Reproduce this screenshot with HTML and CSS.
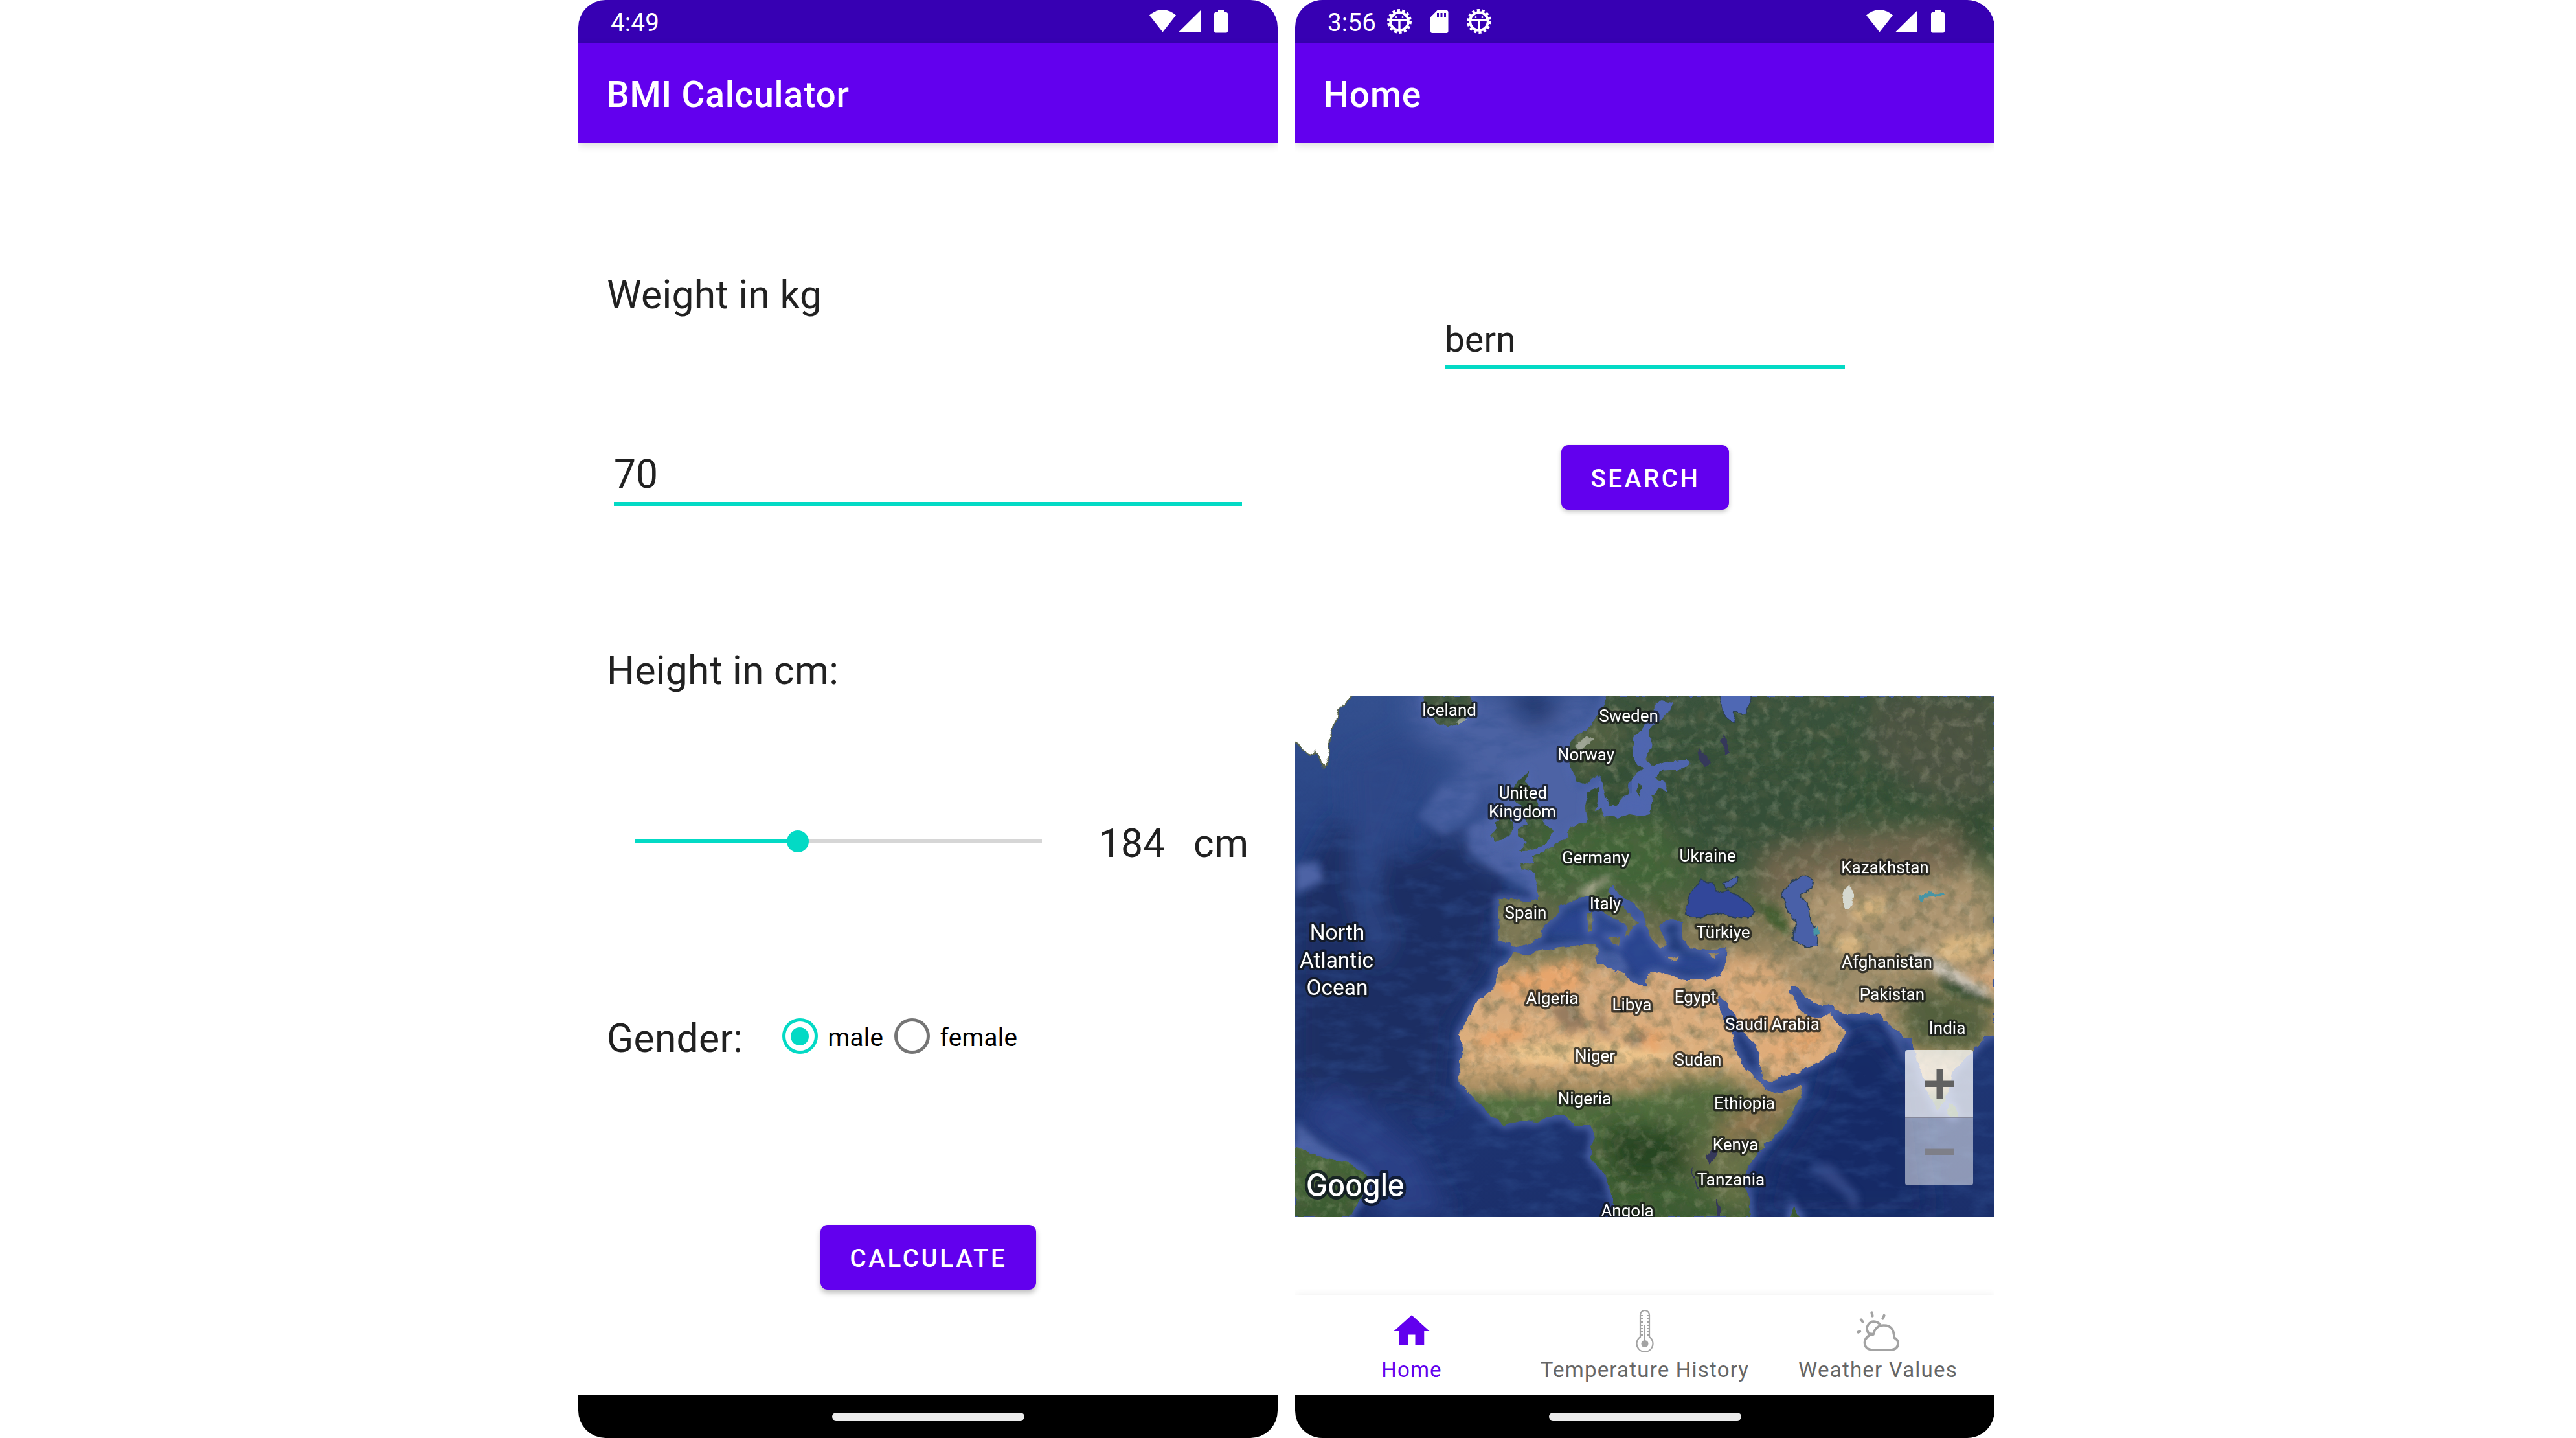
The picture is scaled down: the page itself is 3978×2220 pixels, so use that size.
FILE: index.html
```html
<!DOCTYPE html>
<html lang="en">
<head>
<meta charset="utf-8">
<title>BMI Calculator and Weather</title>
<link rel="stylesheet" href="styles.css">
</head>
<body>
<svg class="defs" width="0" height="0" aria-hidden="true">
  <symbol id="system" viewBox="0 0 121 36">
    <path fill="#fff" d="M0 8.500Q20.500-8.500 41 8.500L20.500 34.500Z"/>
    <path fill="#fff" d="M79 1V35H44.500Z"/>
    <path fill="#fff" d="M106 0h9v4h3.500a2.500 2.500 0 0 1 2.500 2.500V33a2.500 2.500 0 0 1-2.500 2.500h-16A2.500 2.500 0 0 1 100 33V6.500a2.500 2.500 0 0 1 2.500-2.500H106Z"/>
  </symbol>
  <symbol id="bug" viewBox="-20 -20 40 40">
    <g fill="none" stroke="#fff">
      <circle r="13.800" stroke-width="4"/>
      <circle r="16.900" stroke-width="4.200" stroke-dasharray="4.200 3.385"/>
      <path d="M-13-1.700H13M0-1V14" stroke-width="3.400"/>
    </g>
    <circle cx="-5" cy="-6.500" r="1.500" fill="#fff"/><circle cx="5" cy="-6.500" r="1.500" fill="#fff"/>
  </symbol>
  <symbol id="sdcard" viewBox="0 0 28 36">
    <path fill="#fff" fill-rule="evenodd" d="M10.500 0H24.500a3 3 0 0 1 3 3V32a3 3 0 0 1-3 3H3a3 3 0 0 1-3-3V10.500ZM10 4V11H13V4ZM15.500 4V11H18.500V4ZM21 4V11H24V4Z"/>
  </symbol>
</svg>

<main class="stage">
  <section class="phone">
    <header class="status">
      <span class="time">4:49</span>
      <svg class="system"><use href="#system"/></svg>
    </header>
    <div class="appbar">BMI Calculator</div>
    <div class="body">
      <div class="heading weight">Weight in kg</div>
      <div class="field kg">70</div>
      <div class="heading height">Height in cm:</div>
      <div class="slider-row">
        <div class="slider"><div class="track"><div class="fill"></div><div class="thumb"></div></div></div>
        <span class="value">184</span><span class="unit">cm</span>
      </div>
      <div class="gender-row">
        <span class="gender">Gender:</span>
        <label class="option"><i class="ring on"></i>male</label>
        <label class="option"><i class="ring"></i>female</label>
      </div>
      <button class="button calculate">CALCULATE</button>
    </div>
    <footer class="gesture"><i></i></footer>
  </section>

  <section class="phone">
    <header class="status">
      <span class="time">3:56</span>
      <svg class="bug"><use href="#bug"/></svg>
      <svg class="sdcard"><use href="#sdcard"/></svg>
      <svg class="bug"><use href="#bug"/></svg>
      <svg class="system"><use href="#system"/></svg>
    </header>
    <div class="appbar">Home</div>
    <div class="body">
      <div class="field city">bern</div>
      <button class="button search">SEARCH</button>
      <div class="map">
        <svg class="terrain" viewBox="0 0 1080 804">
          <defs>
            <path id="land" d="M479 0L472 25 452 50 425 68 424 90 425 108 434 132 446 136 460 126 469 120 476 138 480 155 486 168 495 172 500 162 516 152 514 140 518 128 535 112 521 95 523 65 537 48 548 28 557 12 569 7 582 10 576 25 551 47 547 62 551 78 541 98 551 107 584 100 605 98 612 105 601 112 566 115 557 125 562 132 571 130 576 148 562 142 551 155 548 182 535 185 516 182 499 188 488 183 478 186 474 172 463 175 467 158 467 140 453 148 449 172 451 193 425 202 418 218 397 232 385 240 367 248 369 257 348 258 351 267 369 272 374 292 374 312 362 318 340 313 314 313 313 335 316 355 314 377 332 382 337 388 358 383 379 372 383 355 404 338 409 323 425 317 453 307 463 315 470 328 495 345 513 355 511 372 516 365 520 352 530 350 516 335 492 315 483 295 490 290 499 305 523 322 537 332 541 352 551 372 566 392 573 382 562 352 584 343 598 348 598 372 609 388 637 392 666 387 664 412 655 433 630 438 601 438 562 425 545 428 541 445 530 445 502 427 467 412 465 400 469 392 463 382 411 387 380 392 355 400 341 395 334 405 313 422 307 452 281 468 267 498 253 523 260 545 253 577 255 598 278 622 299 645 323 662 351 655 372 658 393 647 418 647 432 662 456 662 462 678 455 712 481 742 492 778 495 804H703L701 772 692 745 701 722 730 688 762 655 780 622 785 602 759 610 734 613 723 602 691 568 676 538 673 518 651 475 655 462 666 472 687 508 716 548 723 592 734 595 794 572 834 548 851 518 837 505 825 488 809 498 787 492 762 455 765 448 776 448 791 468 816 478 826 475 837 487 869 492 901 490 916 505 941 528 953 528 955 545 964 575 976 608 992 640 1005 622 1014 582 1048 545 1066 525 1080 523V0H705L696 27 680 25 676 40 662 28 657 0Z"/>
            <path id="isles" d="M362 115L350 126 338 140 337 160 352 172 358 198 344 204 344 218 358 225 344 240 390 228 399 208 383 195 378 176 365 142 355 130ZM307 195L330 182 337 195 335 212 309 225 302 215 310 205ZM197 0L203 22 218 38 235 48 264 38 278 15 271 0ZM0 695L46 713 81 720 109 737 113 752 99 778 83 804H0ZM451 335l7 0 1 26-6 3zM483 372l19 0-2 13zM570 401l24 1-10 5zM638 398l16-2-6 8zM769 788l10 16h-16zM1011 628q12 8 10 20-8 8-12-2zM530 135l6 4-5 14-4-6z"/>
            <clipPath id="landClip"><use href="#land"/><use href="#isles"/></clipPath>
            <linearGradient id="sea" x2="0" y2="1"><stop offset="0" stop-color="#34508f"/><stop offset=".35" stop-color="#243f7f"/><stop offset="1" stop-color="#1b2f6b"/></linearGradient>
            <linearGradient id="ground" x2="0" y2="1"><stop offset="0" stop-color="#3a523c"/><stop offset=".2" stop-color="#334f35"/><stop offset=".35" stop-color="#455d3c"/><stop offset=".47" stop-color="#777352"/><stop offset=".53" stop-color="#d6a87b"/><stop offset=".7" stop-color="#deb07d"/><stop offset=".75" stop-color="#a98e62"/><stop offset=".78" stop-color="#53703f"/><stop offset="1" stop-color="#395a30"/></linearGradient>
            <filter id="b6" x="-30%" y="-30%" width="160%" height="160%"><feGaussianBlur stdDeviation="6"/></filter>
            <filter id="b20" x="-50%" y="-50%" width="200%" height="200%"><feGaussianBlur stdDeviation="18"/></filter>
            <filter id="coast" x="0" y="0" width="100%" height="100%"><feTurbulence type="fractalNoise" baseFrequency=".07" numOctaves="3" seed="4"/><feDisplacementMap in="SourceGraphic" scale="9" xChannelSelector="R" yChannelSelector="G"/></filter>
            <filter id="streaks" x="0" y="0" width="100%" height="100%"><feTurbulence type="fractalNoise" baseFrequency=".022 .05" numOctaves="5" seed="8"/><feColorMatrix values="0 0 0 0 .03  0 0 0 0 .08  0 0 0 0 .28  2.200 0 0 0 -.950"/></filter>
            <filter id="relief" x="0" y="0" width="100%" height="100%"><feTurbulence type="fractalNoise" baseFrequency=".045" numOctaves="5" seed="21"/><feColorMatrix values="0 0 0 0 .1  0 0 0 0 .12  0 0 0 0 .06  2.400 0 0 0 -1.050"/></filter>
            <filter id="light" x="0" y="0" width="100%" height="100%"><feTurbulence type="fractalNoise" baseFrequency=".06" numOctaves="5" seed="33"/><feColorMatrix values="0 0 0 0 .9  0 0 0 0 .82  0 0 0 0 .62  0 2.600 0 0 -1.250"/></filter>
          </defs>
          <rect width="1080" height="804" fill="url(#sea)"/>
          <g filter="url(#b20)">
            <path fill="#1a2d63" d="M60 190L180 250 240 200 290 260 370 300 310 330 300 420 240 500 230 640 0 600V300Z"/>
            <path fill="#4c62a3" d="M170 0H480L420 120 420 200 360 250 300 255 270 225 280 195 310 180 310 120 250 200 220 190 230 140 270 100 190 60Z"/>
            <path fill="#2d4687" d="M80 100L170 60 200 90 120 300 150 380 120 420 90 300Z"/>
            <path fill="#1c3268" d="M320 0H400L410 30 360 50Z"/>
            <path fill="#182b66" d="M830 540L900 510 960 600 980 804H720L740 720 810 620Z"/>
            <path fill="#293f86" d="M0 655L100 730 130 804H240L190 700 60 600Z"/>
          </g>
          <g filter="url(#b6)" fill="#4d63a5">
            <path d="M190 185L230 135 275 135 283 160 265 190 230 215Z" opacity=".75"/>
            <path d="M268 200L300 190 380 240 385 315 340 290 290 255 270 240Z"/>
            <path d="M0 260L35 255 45 285 0 305Z"/>
            <path d="M0 655L40 690 110 735 90 725 0 700Z"/>
            <path d="M465 395L505 390 520 420 500 428 470 414Z"/>
            <path d="M910 500L925 510 955 570 940 560Z"/>
            <path d="M795 725L825 720 870 770 865 800 850 770 800 735Z" opacity=".5"/>
          </g>
          <path fill="#2a4590" filter="url(#b6)" d="M385 365L420 335 455 325 500 360 540 350 580 400 660 400 650 430 560 420 530 435 500 395 460 375Z"/>
          <rect width="1080" height="804" filter="url(#streaks)" opacity=".5"/>
          <path fill="#4d63a5" filter="url(#b6)" d="M320 100L425 70 435 140 480 130 520 180 450 200 390 250 310 250 300 190 330 130Z"/>
          <path fill="#4f66b0" d="M520 45L560 0H590V50L620 95 610 120 580 160 550 190H460L470 130 520 150Z"/>
          <g fill="none" stroke="#4f66ad" stroke-width="10" filter="url(#b6)"><use href="#land"/><use href="#isles"/></g>
          <g filter="url(#coast)">
            <g clip-path="url(#landClip)">
              <rect width="1080" height="804" fill="url(#ground)"/>
              <g filter="url(#b20)">
                <path fill="#4c5342" d="M900 0H1080V170L960 150 880 80Z"/>
                <path fill="#345038" d="M560 100H850V260H640Z"/>
                <path fill="#426537" d="M360 200L560 190 620 290 520 310 380 300Z"/>
                <path fill="#736750" d="M720 245L840 215 1040 195 1040 300 800 310 710 320Z"/>
                <path fill="#ad9570" d="M800 290L1080 270V400L960 490 800 470 700 380Z"/>
                <path fill="#304c30" d="M1000 180L1080 160V240L1040 245Z"/>
                <path fill="#877b59" d="M590 340L760 335 790 400 680 385 600 390Z"/>
                <path fill="#9c8b67" d="M740 380L800 390 920 400 900 490 820 475 750 440Z"/>
                <path fill="#52603d" d="M950 430L1080 470V560L950 550 920 500Z"/>
                <path fill="#dfac79" d="M670 400L740 420 850 510 820 560 740 600 660 480Z"/>
                <path fill="#837b59" d="M310 310L380 320 370 380 320 380Z"/>
                <path fill="#6b7044" d="M340 395L460 392 470 410 350 415 310 460Z"/>
                <path fill="#264522" d="M470 660L610 670 610 740 500 750Z"/>
                <path fill="#9b7a55" d="M650 650L760 600 790 610 730 690 660 700Z"/>
                <path fill="#526c3d" d="M560 600L670 590 700 640 650 660 560 640Z"/>
                <path fill="#677147" d="M600 690L720 680 700 804 640 770Z"/>
                <path fill="#556242" d="M425 60L480 20 510 60 440 130Z"/>
              </g>
              <g filter="url(#b6)">
                <path fill="#e7a56c" d="M300 440L440 405 440 450 340 470ZM290 520L360 510 350 530 270 540ZM530 510L570 520 560 560 530 550ZM730 550L820 510 800 545Z"/>
                <path fill="#eec58b" d="M330 540L440 530 600 555 500 570 340 565Z"/>
                <path fill="#977b5e" d="M390 480L430 470 455 510 420 520ZM505 530L550 515 530 545ZM460 475L475 490 490 530 470 520Z"/>
                <path fill="#d5b27e" d="M985 390L1010 370 1080 365V385L1040 410 1000 410ZM820 375L880 365 870 400 850 400ZM870 315L910 310 910 345 860 345Z"/>
                <path fill="#cdc7bd" d="M950 390L1000 410 1080 460 1060 460 1000 430 950 405Z"/>
                <path fill="#304d2d" d="M985 425L1060 460 1080 470V480L1010 460Z"/>
                <path fill="#3f5b2d" d="M560 310L610 345 590 345 555 320ZM700 310L750 330 770 370 750 365 720 335Z"/>
                <path fill="#a0a088" d="M435 300L485 275 490 280 450 310Z"/>
              </g>
              <rect width="1080" height="804" filter="url(#relief)" opacity=".5"/>
              <rect width="1080" height="804" filter="url(#light)" opacity=".2"/>
            </g>
            <g fill="#4860a8" stroke="#2c4055" stroke-width="1.500">
              <path fill="#30479a" d="M605 338L603 328 612 302 626 282 644 288 650 302 669 300 701 318 712 333 698 343 651 335 626 342Z"/>
              <path d="M659 290L684 277 682 290 664 297ZM753 302L762 288 787 278 800 282 798 295 780 305 794 328 796 348 807 365 805 385 791 388 769 375 773 348 759 328Z"/>
              <path fill="#5067b4" d="M657-9V4L662 28 676 40 680 25 696 27 705 4V-9Z"/>
            </g>
            <path fill="#35385a" d="M621 82l13 7 8 12-10 9-8-12zM657 68l5-8 8 26-7 4zM634 712l13-18 5 12-10 18zM613 725l4 20 10 20-7-7-7-20zM650 774l6 14 0 16-5 0z"/>
            <path fill="#d5d8cf" d="M848 298l8-5 10 10-10 24-7 0-4-15z"/>
            <path fill="#4795a5" d="M799 360l6-5 5 12-9 2zM961 315l5-10 20-3 18 1-10 5-22 2-4 10z"/>
            <path fill="#fff" stroke="#5a654e" stroke-width="2" d="M-8-8H98L86 2 76 12 65 22 63 40 53 62 52 80 51 95 44 110 38 97 32 85 20 92 10 78-8 65Z"/>
            <path fill="#dfe0db" d="M248 38l14-8 4 7-14 5zM432 75l20-13 8 6-20 14z" opacity=".5"/>
          </g>
          <path fill="#fff" d="M0 0H62L50 60 40 80H12L0 60Z"/>
          <g class="places">
            <text x="238" y="30">Iceland</text><text x="515" y="39">Sweden</text><text x="449" y="99">Norway</text>
            <text x="352" y="158">United</text><text x="351" y="187">Kingdom</text><text x="464" y="258">Germany</text>
            <text x="637" y="255">Ukraine</text><text x="911" y="273">Kazakhstan</text><text x="356" y="343">Spain</text>
            <text x="479" y="329">Italy</text><text x="661" y="373">Türkiye</text><text x="914" y="419">Afghanistan</text>
            <text x="922" y="469">Pakistan</text><text x="1007" y="521">India</text><text x="618" y="473">Egypt</text>
            <text x="520" y="485">Libya</text><text x="397" y="475">Algeria</text><text x="737" y="515">Saudi Arabia</text>
            <text x="463" y="564">Niger</text><text x="622" y="570">Sudan</text><text x="447" y="630">Nigeria</text>
            <text x="694" y="637">Ethiopia</text><text x="680" y="701">Kenya</text><text x="673" y="755">Tanzania</text>
            <text x="513" y="803">Angola</text>
          </g>
          <g class="places ocean"><text x="65" y="376">North</text><text x="64" y="419">Atlantic</text><text x="65" y="461">Ocean</text></g>
          <text class="google" x="17" y="772" textLength="152" lengthAdjust="spacingAndGlyphs">Google</text>
        </svg>
        <div class="zoom">
          <div class="in"><svg viewBox="0 0 46 46"><path d="M18.500 0h9.500v18.500H46v9.500H28V46h-9.500V28H0v-9.500h18.500Z"/></svg></div>
          <div class="out"><svg viewBox="0 0 46 46"><path d="M0 18.500h46v9.500H0Z"/></svg></div>
        </div>
      </div>
      <nav class="tabs">
        <a class="tab active"><svg viewBox="0 0 24 24"><path fill="currentColor" d="M10 20v-6h4v6h5v-8h3L12 3 2 12h3v8z"/></svg>Home</a>
        <a class="tab"><svg viewBox="0 0 66 66" fill="none" stroke="#a3a3a3">
          <path stroke-width="2.200" d="M26 42V8a7 7 0 0 1 14 0v34a12.500 12.500 0 1 1-14 0Z"/>
          <path stroke-width="2" d="M33 24V50M27 9h3M36 9h3M27 14h3M36 14h3M27 19h3M36 19h3M27 24h3M36 24h3M27 29h3M36 29h3M27 34h3M36 34h3M27 39h3M36 39h3"/>
          <circle cx="33" cy="52.500" r="5.500" fill="#a3a3a3" stroke="none"/></svg>Temperature History</a>
        <a class="tab"><svg viewBox="0 0 66 66" fill="none" stroke="#a3a3a3" stroke-width="3.700" stroke-linecap="round" stroke-linejoin="round">
          <path d="M24 62H53Q64 61 64 52 64 46 58 43 58 24 42 24 29 24 26 38 13 40 12.500 51 13 61 24 62ZM20 38Q13 30 18 23 23 16 31 19 36 21 37 25M26 38Q20 36 19 38"/>
          <path stroke-width="4.200" d="M23.500 4.500L24.500 9.500M42.500 9L40.500 13.500M7 15.500L9.500 18.500M2.500 34.500L5 33.500"/></svg>Weather Values</a>
      </nav>
    </div>
    <footer class="gesture"><i></i></footer>
  </section>
</main>
</body>
</html>
```
FILE: styles.css
```css
* { box-sizing: border-box; }
body { margin: 0; background: #fff; font-family: Roboto, "Liberation Sans", sans-serif; color: #212121; }
.defs { position: absolute; }
.stage { display: flex; gap: 27px; width: 3978px; height: 2220px; padding-left: 893px; overflow: hidden; }
.phone { display: flex; flex-direction: column; width: 1080px; height: 2220px; border-radius: 42px; overflow: hidden; background: #fff; }

.status { display: flex; align-items: flex-start; height: 66px; padding: 0 77px 0 50px; background: #3700b3; color: #fff; font-size: 38.5px; line-height: 69px; }
.time { width: 91px; letter-spacing: .2px; }
.system { width: 121px; height: 36px; margin: 15px 0 0 auto; }
.bug { width: 40px; height: 40px; margin-top: 13px; }
.sdcard { width: 28px; height: 36px; margin: 16px 27px 0 28px; }
.appbar { height: 154px; flex: none; padding-left: 44px; background: #6200ee; color: #fff; font-size: 55px; font-weight: 500; line-height: 160px; letter-spacing: .85px; box-shadow: 0 4px 12px rgba(0, 0, 0, .16); z-index: 1; }
.body { display: flex; flex-direction: column; flex: 1; }

.heading { height: 72px; padding-left: 44px; font-size: 60.5px; line-height: 74px; letter-spacing: .28px; }
.weight { margin-top: 199px; }
.height { margin-top: 218px; }
.field { border-bottom: 6px solid #03dac5; }
.kg { width: 970px; height: 85px; margin: 205px 0 0 55px; font-size: 60.5px; line-height: 74px; }
.slider-row { display: flex; height: 72px; margin: 195px 0 0 88px; font-size: 60.5px; line-height: 74px; }
.slider { display: flex; align-items: center; width: 628px; height: 66px; margin-right: 88px; }
.track { display: flex; align-items: center; width: 100%; height: 6px; background: #d6d6d6; }
.fill { width: 240px; height: 6px; background: #03dac5; }
.thumb { width: 34px; height: 34px; margin-left: -6px; border-radius: 50%; background: #03dac5; }
.unit { margin-left: 44px; letter-spacing: .3px; }
.gender-row { display: flex; height: 72px; margin: 229px 0 0 44px; line-height: 74px; }
.gender { width: 270.5px; font-size: 60.5px; letter-spacing: .3px; }
.option { display: flex; width: 173px; font-size: 38.5px; line-height: 69px; letter-spacing: .3px; color: #000; }
.ring { display: flex; flex: none; width: 55px; height: 55px; margin: 5px 16px 0 0; border: 5.5px solid #757575; border-radius: 50%; align-items: center; justify-content: center; }
.ring.on { border-color: #03dac5; }
.ring.on::after { content: ""; width: 28px; height: 28px; border-radius: 50%; background: #03dac5; }

.button { height: 100px; padding: 0; border: 0; border-radius: 11px; align-self: center; background: #6200ee; color: #fff; font: 500 38.5px/104px Roboto, sans-serif; letter-spacing: 3.65px; box-shadow: 0 5px 8px rgba(0, 0, 0, .26); }
.calculate { width: 333px; margin-top: 252px; padding-left: 2px; }
.search { width: 259px; margin-top: 118px; padding-left: 2px; box-shadow: 0 3px 7px rgba(0, 0, 0, .24); }

.city { width: 618px; height: 78px; margin: 271px 0 0 231px; border-bottom-width: 5px; font-size: 55px; line-height: 66px; letter-spacing: .2px; }
.map { position: relative; height: 804px; margin-top: 288px; overflow: hidden; }
.terrain { display: block; width: 1080px; height: 804px; }
.places { font-size: 26px; fill: #fff; stroke: rgba(15, 18, 18, .72); stroke-width: 7px; stroke-linejoin: round; paint-order: stroke; text-anchor: middle; }
.ocean { font-size: 33.5px; }
.google { font: 500 49px Inter, sans-serif; fill: #fff; stroke: rgba(10, 18, 30, .75); stroke-width: 10px; stroke-linejoin: round; paint-order: stroke; }
.zoom { position: absolute; right: 33px; top: 546px; width: 105px; height: 209px; border-radius: 4px; overflow: hidden; }
.zoom div { display: flex; align-items: center; justify-content: center; height: 104.5px; }
.zoom svg { width: 46px; height: 46px; }
.in { background: rgba(255, 255, 255, .75); border-bottom: 1px solid rgba(90, 90, 110, .6); fill: #616161; }
.out { background: rgba(255, 255, 255, .5); fill: #7e7f88; }

.tabs { display: grid; grid-template-columns: repeat(3, 360px); height: 154px; margin-top: auto; padding-top: 22px; box-shadow: 0 0 12px rgba(0, 0, 0, .08); }
.tab { display: flex; flex-direction: column; align-items: center; gap: 7px; color: #666; font-size: 33px; line-height: 40px; letter-spacing: 1.2px; }
.tab svg { width: 66px; height: 66px; }
.tab.active { color: #6200ee; }

.gesture { display: flex; flex: none; justify-content: center; height: 66px; padding-top: 27px; background: #000; z-index: 1; }
.gesture i { width: 297px; height: 12px; border-radius: 6px; background: #ebebeb; }
```
